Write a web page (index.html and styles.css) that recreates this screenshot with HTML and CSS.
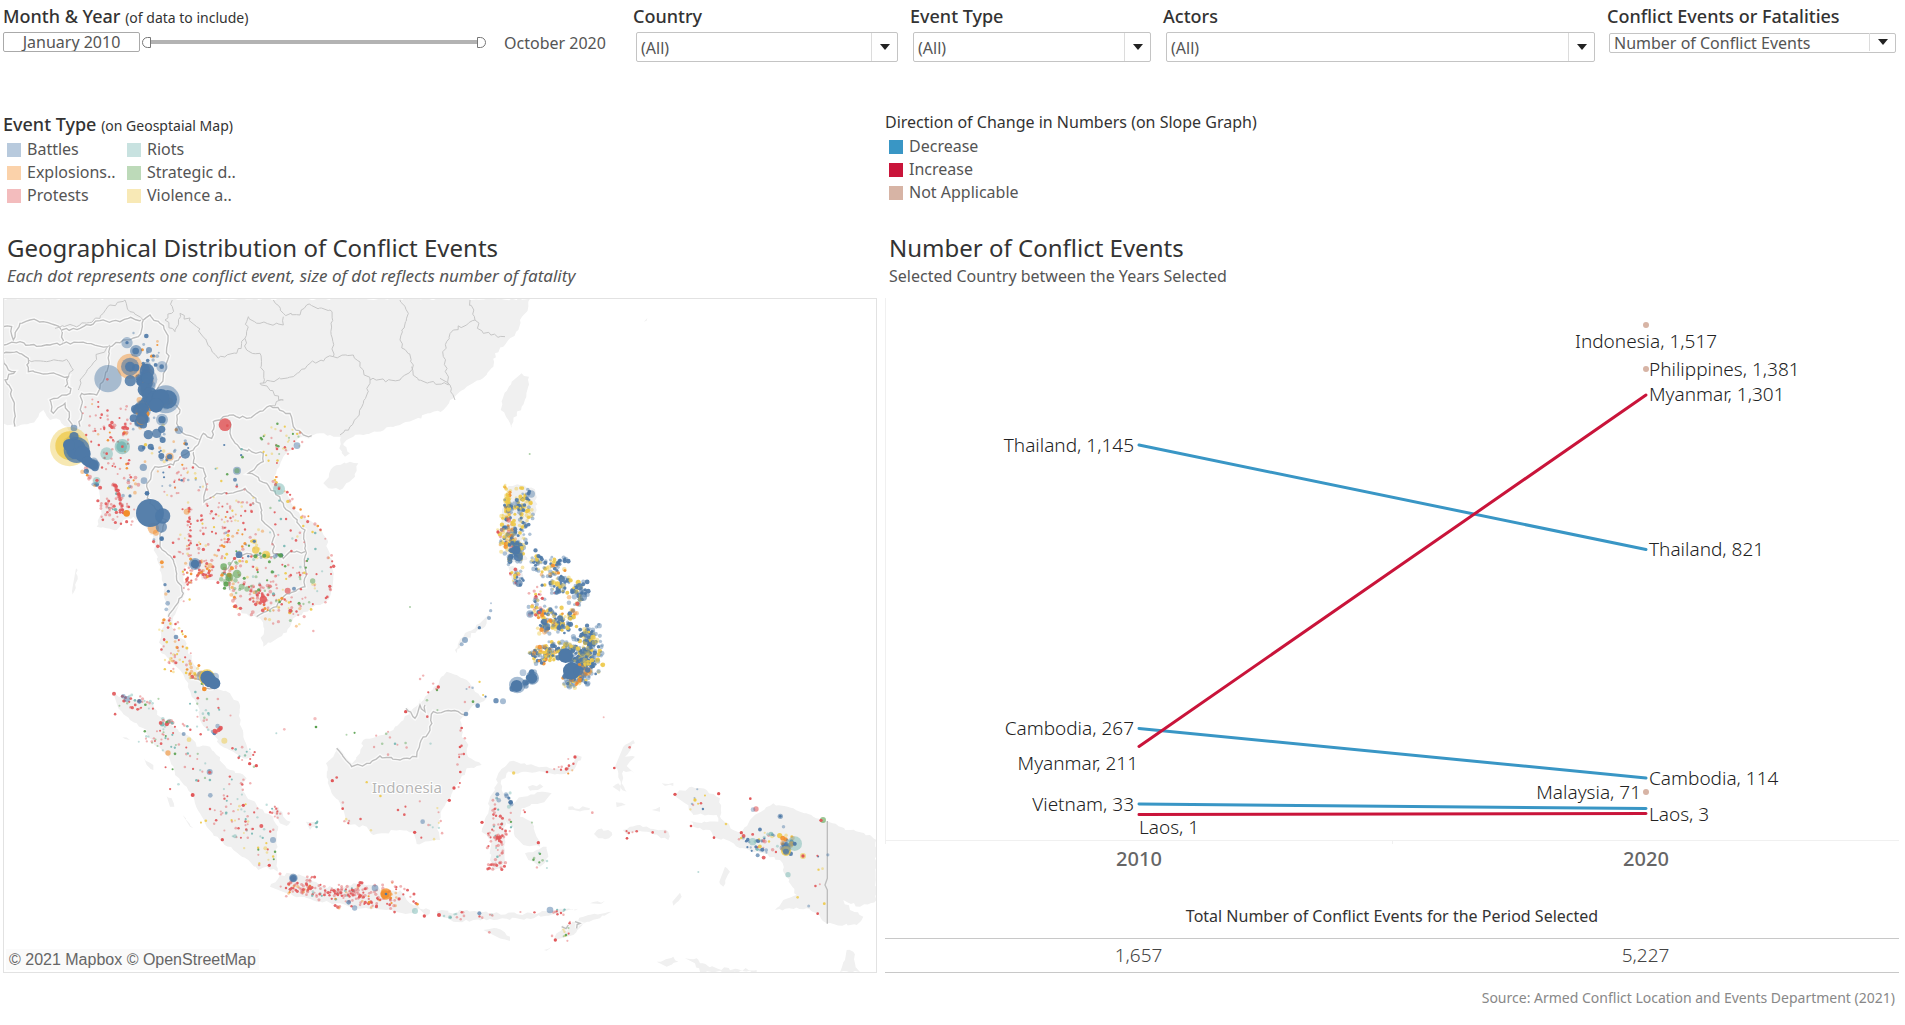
FILE: index.html
```html
<!DOCTYPE html>
<html lang="en">
<head>
<meta charset="utf-8">
<title>Conflict Events in Southeast Asia</title>
<link rel="stylesheet" href="styles.css">
</head>
<body>
<main class="dashboard">
  <form class="filters">
    <div class="filter">
      <label class="filter-label" for="date-from">Month &amp; Year <span class="note">(of data to include)</span></label>
      <div class="period">
        <input class="date-box" id="date-from" type="text" value="January 2010">
        <div class="range">
          <input class="range-input range-start" type="range" min="0" max="129" value="0" aria-label="Start month">
          <input class="range-input range-end" type="range" min="0" max="129" value="129" aria-label="End month">
        </div>
        <span class="date-end">October 2020</span>
      </div>
    </div>
    <div class="filter">
      <label class="filter-label" for="country">Country</label>
      <div class="select"><select id="country"><option>(All)</option></select></div>
    </div>
    <div class="filter">
      <label class="filter-label" for="event-type">Event Type</label>
      <div class="select"><select id="event-type"><option>(All)</option></select></div>
    </div>
    <div class="filter">
      <label class="filter-label" for="actors">Actors</label>
      <div class="select"><select id="actors"><option>(All)</option></select></div>
    </div>
    <div class="filter">
      <label class="filter-label" for="measure">Conflict Events or Fatalities</label>
      <div class="select select-small"><select id="measure"><option>Number of Conflict Events</option></select></div>
    </div>
  </form>

  <div class="columns legends">
    <section class="legend">
      <h2 class="legend-title">Event Type <span class="note">(on Geosptaial Map)</span></h2>
      <ul class="legend-items legend-grid">
        <li class="battles">Battles</li>
        <li class="explosions">Explosions..</li>
        <li class="protests">Protests</li>
        <li class="riots">Riots</li>
        <li class="strategic">Strategic d..</li>
        <li class="violence">Violence a..</li>
      </ul>
    </section>
    <section class="legend">
      <h2 class="legend-title legend-title-small">Direction of Change in Numbers (on Slope Graph)</h2>
      <ul class="legend-items">
        <li class="decrease">Decrease</li>
        <li class="increase">Increase</li>
        <li class="not-applicable">Not Applicable</li>
      </ul>
    </section>
  </div>

  <div class="columns">
    <section class="panel">
      <h1 class="panel-title">Geographical Distribution of Conflict Events</h1>
      <p class="panel-subtitle italic">Each dot represents one conflict event, size of dot reflects number of fatality</p>
      <div class="map">
        <svg class="map-canvas" viewBox="4 299 872 673" role="img" aria-label="Map of conflict events">
          <g id="land" transform="translate(0 290) scale(.33333)"></g>
          <text class="map-label" x="372" y="793">Indonesia</text>
          <g id="events" transform="translate(0 290) scale(.33333)"></g>
        </svg>
        <span class="attribution">© 2021 Mapbox © OpenStreetMap</span>
      </div>
    </section>

    <section class="panel">
      <h1 class="panel-title">Number of Conflict Events</h1>
      <p class="panel-subtitle">Selected Country between the Years Selected</p>
      <svg class="slope" viewBox="885 298 1014 582" role="img" aria-label="Slope graph from 2010 to 2020">
        <path class="axis" d="M885.5 298V844M885 840.500H1899M1392.500 840V844"/>
        <g class="down">
          <path d="M1139 445L1646 549.500"/>
          <path d="M1139 728.500L1646 778"/>
          <path d="M1139 804L1646 808.500"/>
        </g>
        <g class="up">
          <path d="M1139 746.500L1646 395"/>
          <path d="M1139 814.500L1646 813.500"/>
        </g>
        <g class="na">
          <circle cx="1646" cy="325" r="3"/>
          <circle cx="1646" cy="369" r="3"/>
          <circle cx="1646" cy="792" r="3"/>
        </g>
        <g class="mark end">
          <text x="1134" y="452">Thailand, 1,145</text>
          <text x="1134" y="735">Cambodia, 267</text>
          <text x="1138" y="770">Myanmar, 211</text>
          <text x="1134" y="811">Vietnam, 33</text>
          <text x="1641" y="799">Malaysia, 71</text>
        </g>
        <g class="mark">
          <text x="1139" y="834">Laos, 1</text>
          <text x="1575" y="348">Indonesia, 1,517</text>
          <text x="1649" y="376">Philippines, 1,381</text>
          <text x="1649" y="401">Myanmar, 1,301</text>
          <text x="1649" y="556">Thailand, 821</text>
          <text x="1649" y="785">Cambodia, 114</text>
          <text x="1649" y="821">Laos, 3</text>
        </g>
        <g class="years">
          <text x="1139" y="866">2010</text>
          <text x="1646" y="866">2020</text>
        </g>
      </svg>
      <table class="totals">
        <caption>Total Number of Conflict Events for the Period Selected</caption>
        <tbody><tr><td>1,657</td><td>5,227</td></tr></tbody>
      </table>
    </section>
  </div>
  <footer class="source">Source: Armed Conflict Location and Events Department (2021)</footer>
</main>
<script src="map.js"></script>
</body>
</html>
```
FILE: styles.css
```css
* { box-sizing: border-box; }
body {
  margin: 0;
  background: #fff;
  color: #333;
  font-family: "Noto Sans", "Open Sans", sans-serif;
  font-size: 16px;
  font-weight: 400;
}
.dashboard { padding: 4px 6px 0 3px; }

.filters {
  display: grid;
  grid-template-columns: minmax(0, 630fr) minmax(0, 277fr) minmax(0, 253fr) minmax(0, 444fr) minmax(0, 292fr);
  height: 108px;
}
.filter { display: flex; flex-direction: column; align-items: stretch; }
.filter-label, .legend-title {
  margin: 0;
  font-size: 18px;
  line-height: 25px;
  font-weight: 500;
  white-space: nowrap;
}
.filter-label { padding-bottom: 3px; }
.note { font-size: 14px; font-weight: 400; }

.period { display: flex; align-items: center; height: 20px; margin-top: -1px; color: #555; }
.date-box {
  width: 137px;
  height: 20px;
  padding: 0;
  border: 1px solid #aaa;
  border-radius: 2px;
  color: #555;
  font: inherit;
  text-align: center;
}
.range {
  display: grid;
  align-items: center;
  width: 344px;
  height: 20px;
  margin-left: 2px;
  background: linear-gradient(#b3b3b3, #b3b3b3) center / 328px 4px no-repeat;
}
.range-input {
  grid-area: 1 / 1;
  width: 100%;
  height: 12px;
  margin: 0;
  background: none;
  appearance: none;
  pointer-events: none;
}
.range-input::-webkit-slider-thumb {
  width: 9px;
  height: 11px;
  border: 1px solid #777;
  background: #fff;
  appearance: none;
  pointer-events: auto;
}
.range-start::-webkit-slider-thumb { border-radius: 6px 0 0 6px; }
.range-end::-webkit-slider-thumb { border-radius: 0 6px 6px 0; }
.date-end { margin-left: 18px; padding-top: 1px; line-height: 20px; }

.select { position: relative; height: 30px; margin: 0 12px 0 3px; }
.select-small { height: 20px; margin: 0 3px 0 2px; }
.select select {
  width: 100%;
  height: 100%;
  padding: 2px 30px 0 4px;
  border: 1px solid #c4c4c4;
  border-radius: 2px;
  background: #fff;
  color: #555;
  font: inherit;
  line-height: 18px;
  appearance: none;
}
.select-small select { padding-top: 0; }
.select::before, .select::after { content: ""; position: absolute; pointer-events: none; }
.select::before { top: 1px; bottom: 1px; right: 26px; width: 1px; background: #dcdcdc; }
.select::after {
  right: 8px;
  top: calc(50% - 3px);
  border: 5px solid transparent;
  border-top: 6px solid #222;
  border-bottom: 0;
}

.columns { display: grid; grid-template-columns: minmax(0, 874fr) minmax(0, 1014fr); column-gap: 8px; }
.legends { height: 120px; }
.legend-title-small { padding-bottom: 3px; font-size: 16px; line-height: 20px; font-weight: 400; }
.legend-items { margin: 0; padding: 0 0 0 4px; list-style: none; line-height: 23px; color: #555; }
.legend-items li { display: flex; align-items: center; gap: 6px; }
.legend-items li::before { content: ""; width: 14px; height: 14px; }
.legend-grid {
  display: grid;
  grid-template-rows: repeat(3, 23px);
  grid-template-columns: 120px 120px;
  grid-auto-flow: column;
}
.battles::before { background: #b8cadd; }
.explosions::before { background: #fbd2aa; }
.protests::before { background: #f3bcbd; }
.riots::before { background: #c8e2e0; }
.strategic::before { background: #bddab9; }
.violence::before { background: #f8e9b6; }
.decrease::before { background: #3996c5; }
.increase::before { background: #c9143a; }
.not-applicable::before { background: #d7b4a5; }

.panel { display: flex; flex-direction: column; }
.panel-title { margin: 0 0 0 4px; font-size: 24px; line-height: 32px; font-weight: 400; }
.panel-subtitle { margin: 0 0 10px 4px; font-size: 16px; line-height: 24px; color: #555; }
.italic { font-size: 17px; font-style: italic; }

.map { position: relative; border: 1px solid #e2e2e2; }
.map-canvas, .slope { display: block; width: 100%; }
.map-label { fill: #b5b5b5; font-size: 15px; font-weight: 400; stroke: #fff; stroke-width: 2px; paint-order: stroke; }
.attribution {
  position: absolute;
  left: 2px;
  bottom: 2px;
  padding: 0 3px;
  background: #fafafa;
  color: #666;
  font: 16px/21px "Liberation Sans", Arial, sans-serif;
}
.coast { fill: #f0f0f0; }
.halo { fill: none; stroke: #fafafa; stroke-width: 12px; }
.border { fill: none; stroke: #bdbdbd; stroke-width: 4px; }
.province { fill: none; stroke: #c6c6c6; stroke-width: 3px; }

.axis { fill: none; stroke: #f0f0f0; }
.down, .up { fill: none; stroke-width: 3px; stroke-linecap: round; }
.down { stroke: #3996c5; }
.up { stroke: #c9143a; }
.na { fill: #d7b4a5; }
.mark { fill: #222; font-size: 19px; font-weight: 300; }
.end { text-anchor: end; }
.years { fill: #666; font-size: 20px; font-weight: 500; text-anchor: middle; }

.totals { width: 100%; border-collapse: collapse; table-layout: fixed; }
.totals caption { padding: 24px 0 9px; color: #333; font-size: 16px; line-height: 25px; font-weight: 400; }
.totals td {
  height: 34px;
  padding: 0 0 2px;
  border: solid #c8c8c8;
  border-width: 1px 0;
  font-size: 19px;
  font-weight: 300;
  line-height: 30px;
  color: #444;
  text-align: center;
}
.source { padding: 14px 4px 0 0; color: #888; font-size: 14px; line-height: 22px; text-align: right; }
```
FILE: map.js
```js
// Map geometry is kept in tiles; each tile has its own origin.
const TILE = { A: [0, 0], B: [0, 1050], C: [1320, 0], D: [1320, 1050] };
const COLOR = { b: '#4e79a7', o: '#f28e2b', r: '#e15759', t: '#76b7b2', g: '#59a14f', y: '#edc948' };
const NS = 'http://www.w3.org/2000/svg';

let seed = 7;
const rnd = () => { seed = (seed * 16807) % 2147483647; return seed / 2147483647; };
const gauss = () => (rnd() + rnd() - 1) * 1.3;

function parse(tile, text) {
  return text.trim().split(/\s+/).map(p => {
    const [x, y] = p.split(',').map(Number);
    return [x + TILE[tile][0], y + TILE[tile][1]];
  });
}

// Break long segments up so that coasts and borders look natural.
function rough(points, amount) {
  const out = [points[0]];
  for (let i = 1; i < points.length; i++) {
    const [x0, y0] = points[i - 1], [x1, y1] = points[i];
    const n = Math.max(1, Math.round(Math.hypot(x1 - x0, y1 - y0) / 11));
    for (let k = 1; k <= n; k++) {
      const j = k < n ? amount : 0;
      out.push([x0 + (x1 - x0) * k / n + (rnd() - .5) * j, y0 + (y1 - y0) * k / n + (rnd() - .5) * j]);
    }
  }
  return out;
}

function add(parent, tag, attrs) {
  const el = document.createElementNS(NS, tag);
  for (const k in attrs) el.setAttribute(k, attrs[k]);
  parent.appendChild(el);
}
const toPath = pts => 'M' + pts.map(p => p[0].toFixed(1) + ' ' + p[1].toFixed(1)).join('L');

const coasts = [
  // mainland with the Malay peninsula
  ['A', '10,26 1590,26 1585,50 1560,90 1555,120 1525,150 1510,170 1485,190 1480,230 1440,270 1400,290 1350,330 1330,360 1290,370 1240,390 1200,405 1160,412 1130,425 1090,435 1060,440 1040,450 1030,465 1050,490 1035,500 1018,475 1022,440 990,435 960,430 935,437 915,440 890,450 880,470 850,500 838,530 822,560 825,580 860,610 880,650 915,685 950,705 975,740 985,780 998,830 1000,860 990,920 970,940 930,955 905,975 880,985 870,1010 850,1030 825,1050 790,1070 785,1050 790,1010 780,985 750,980 725,970 710,945 695,910 680,895 670,880 640,870 605,870 600,845 590,820 555,830 550,860 558,885 550,915 535,950 520,980 515,1010 530,1040 555,1050 565,1080 575,1110 600,1150 640,1190 690,1210 718,1240 722,1290 730,1340 755,1400 730,1405 700,1385 660,1365 640,1330 605,1300 595,1250 575,1220 565,1180 540,1140 500,1100 485,1090 480,1050 490,1000 510,985 505,960 495,930 490,880 475,820 460,760 450,720 430,700 400,680 370,690 350,720 320,715 290,710 305,670 300,620 290,590 265,560 255,530 240,500 220,480 215,440 200,410 180,390 150,390 130,360 115,380 90,400 50,410 10,400'],
  ['A', '970,580 1000,530 1050,515 1075,520 1065,560 1020,600 985,595'],
  ['A', '228,835 233,840 225,900 215,925 218,890'],
  ['C', '245,250 267,260 262,300 245,350 220,395 215,415 205,390 182,360 190,320 215,275'],
  ['C', '205,588 240,585 285,598 290,660 262,700 245,720 250,760 260,810 205,820 180,740 190,650'],
  ['C', '205,830 235,835 250,860 240,890 220,885'],
  ['C', '150,970 140,1000 70,1052 50,1090 45,1080 70,1040 120,1000'],
  // Sumatra and its islands
  ['B', '340,160 370,175 430,180 460,195 480,230 520,260 570,290 590,320 630,320 650,345 680,385 720,400 740,415 725,440 740,470 765,485 775,505 820,530 835,560 830,600 830,655 833,695 800,680 775,690 745,660 700,630 660,600 620,560 600,520 580,470 560,440 525,405 510,360 490,335 460,310 430,265 390,240 355,205'],
  ['B', '432,355 460,375 460,390 440,375'], ['B', '500,468 515,475 523,500 510,500'],
  ['B', '548,525 580,565 570,560'], ['B', '362,288 390,300 375,297'],
  ['B', '815,510 835,500 850,530 872,545 860,558 835,540'], ['B', '918,545 945,545 948,560 930,570'],
  // Java to Timor
  ['B', '810,740 840,705 880,700 930,715 970,740 1020,745 1060,730 1130,735 1150,760 1200,750 1220,780 1260,805 1230,820 1160,810 1090,805 1010,790 960,785 900,770 860,760'],
  ['B', '1255,805 1290,810 1280,828'], ['B', '1310,815 1345,812 1340,835 1315,830'],
  ['D', '10,825 70,812 160,820 290,822 330,812 415,806 360,818 260,835 100,840 40,845'],
  ['D', '345,900 350,880 380,860 430,830 515,815 480,835 430,850 400,885'],
  ['D', '130,870 170,865 210,890 210,903 170,890'],
  ['D', '450,790 495,782 480,792'], ['D', '312,930 335,920 320,932'],
  // Borneo
  ['B', '1000,350 1015,325 1050,378 1080,340 1090,300 1130,290 1180,270 1230,215 1290,155 1340,95 1370,105 1400,120 1425,155 1460,175 1420,195 1400,225 1380,240 1385,290 1405,315 1400,340 1445,375 1400,385 1380,420 1360,450 1345,480 1325,510 1315,560 1320,600 1250,612 1240,575 1200,570 1120,585 1100,560 1045,555 1030,510 1015,480 995,460 985,420 978,370'],
  // Sulawesi and Halmahera
  ['D', '165,450 175,400 195,380 220,362 260,375 330,385 370,390 400,370 410,345 425,350 405,385 375,402 330,400 250,395 200,400 182,430 185,450 220,490 250,470 310,455 335,460 300,490 245,505 240,530 275,545 290,590 300,620 250,615 225,590 220,560 195,540 195,600 190,685 160,690 150,660 155,600 125,575 145,520 150,470'],
  ['D', '550,320 580,300 585,310 555,350 585,350 560,378 583,400 550,392 545,430 560,455 540,440 535,400 525,380'],
  ['D', '385,500 450,505 448,510 385,510'], ['D', '528,487 558,495 530,502'], ['D', '635,510 660,500 660,515'],
  ['D', '462,582 475,568 505,570 517,585 495,598 475,595'],
  ['D', '255,640 320,620 325,650 300,680 265,660'],
  ['D', '548,570 600,555 685,575 685,600 620,575 560,582'], ['D', '665,430 700,428 700,438 675,438'],
  // New Guinea
  ['D', '700,465 755,440 800,450 840,475 840,530 880,570 905,575 930,540 1000,490 1060,505 1120,530 1165,545 1230,570 1290,585 1309,600 1309,780 1260,800 1210,780 1230,810 1270,830 1250,855 1160,850 1130,820 1100,805 1005,810 1030,780 1070,765 1040,710 1020,660 970,640 900,625 860,600 820,590 810,570 760,560 750,545 835,545 830,525 760,525 735,490'],
  ['D', '855,680 870,695 850,740 838,725'], ['D', '720,758 725,770 700,797 697,785'],
  // northern Australia
  ['D', '650,965 700,950 715,965 680,980'], ['D', '735,955 770,955 780,970 830,985 950,990 950,996 780,996 765,970'],
  ['D', '1220,930 1240,935 1245,970 1260,996 1200,996 1215,960'],
  ['C', '612,95 622,84 620,92'], ['D', '263,440 300,432 310,440 270,452'], ['D', '518,440 535,430 540,455']
];

const borders = [
  ['A', '10,110 35,110 40,150 60,100 90,90 130,95 165,105 185,120 190,160 150,165 90,165 60,155 12,165'],
  ['A', '185,120 240,115 300,92 360,95 385,85 430,90 450,75 480,100 500,130 503,210 490,260 470,300 540,360 530,400 550,430 600,450 610,430 635,445 640,395 670,380 700,375 740,385 770,370 810,347 870,370 880,410 910,435 935,437'],
  ['A', '690,395 690,430 720,475 790,490 790,515 745,550 800,580 850,640 880,680 915,720 915,890 850,920 830,950 770,980'],
  ['A', '600,450 580,480 580,520 610,535 620,590 612,635 650,610 710,605 735,595 780,640 785,690 820,725 820,790 850,805 870,785 915,785'],
  ['A', '580,480 550,495 520,525 465,530 440,590 450,640 500,690 480,740 480,770 520,810 530,870 550,910 525,950 505,980'],
  ['A', '820,800 740,790 700,810 675,840 690,900'],
  ['A', '190,160 260,160 330,170 370,150 415,140 430,90'],
  ['A', '330,170 325,230 290,315 245,310 240,410'],
  ['A', '205,260 210,310 150,330 160,370 195,340 215,410'],
  ['A', '10,190 50,185 85,205 85,245 150,250 205,260 195,290'],
  ['A', '10,205 25,240 45,245 15,270 35,300 45,410'],
  ['B', '1010,325 1055,380 1110,370 1140,348 1200,360 1250,350 1260,310 1290,270 1300,215 1375,215 1395,225'],
  ['B', '1218,205 1245,235 1260,195 1275,215 1275,195'],
  ['B', '570,115 600,120 610,145 640,145'],
  ['D', '365,860 378,866 385,855'], ['D', '405,845 420,850 410,865']
];
const provinces = [
  ['A', '165,115 240,105 300,85 330,45 375,30 390,65 430,90'], ['A', '85,210 140,215 200,208 220,240 205,260'],
  ['A', '235,300 240,270 300,190 330,165'],
  ['A', '517,30 515,70 495,90 525,125 540,70 590,110 630,170 655,205 710,190 735,145 745,80 780,100 850,105 850,80'],
  ['A', '820,30 850,70 900,75 920,45 990,60 1000,200 930,220 880,260 780,280 850,330 810,347'],
  ['A', '735,145 740,180 780,190 790,280'],
  ['A', '1000,200 1060,195 1090,240 1110,270 1090,340 1050,410 1020,435'],
  ['A', '1110,270 1200,270 1240,225 1200,150 1225,70 1200,30'],
  ['A', '1235,230 1255,270 1345,285 1330,200 1340,155 1360,120 1425,90 1410,30'],
  ['A', '1425,90 1450,130 1515,140'], ['A', '1320,265 1350,285 1365,330']
];

const land = document.getElementById('land');
coasts.forEach(([t, p]) => add(land, 'path', { class: 'coast', d: toPath(rough(parse(t, p), 9)) + 'Z' }));
borders.forEach(([t, p]) => {
  const d = toPath(rough(parse(t, p), 9));
  add(land, 'path', { class: 'halo', d });
  add(land, 'path', { class: 'border', d });
});
provinces.forEach(([t, p]) => add(land, 'path', { class: 'province', d: toPath(rough(parse(t, p), 12)) }));
add(land, 'path', { class: 'border', d: 'M2482 1593V1765L2475 1785L2482 1800V1901' });

const events = document.getElementById('events');
const dot = (x, y, r, c, o) => add(events, 'circle', { cx: x.toFixed(1), cy: y.toFixed(1), r: r.toFixed(1), fill: COLOR[c], opacity: o });

// cloud: tile, cx, cy, rx, ry, count, colour mix, min r, max r
const clouds = [
  ['A', 330, 390, 70, 85, 44, 'rrrrro', 3, 4], ['A', 376, 415, 8, 22, 12, 'rro', 4, 6], ['A', 335, 410, 14, 12, 6, 'r', 4, 6],
  ['A', 340, 520, 55, 70, 22, 'rrro', 3, 4], ['A', 350, 665, 50, 45, 46, 'rrrrt', 3, 5], ['A', 395, 580, 25, 50, 14, 'royb', 3, 6],
  ['A', 540, 570, 75, 60, 36, 'rrryob', 3, 4], ['A', 640, 700, 95, 100, 56, 'rrrrroy', 3, 4], ['A', 700, 670, 80, 70, 34, 'rrryo', 3, 4],
  ['A', 590, 810, 65, 50, 44, 'rrrrroy', 3, 5], ['A', 620, 850, 32, 24, 22, 'rrrro', 4, 5], ['A', 740, 770, 80, 45, 34, 'rrygbo', 3, 5],
  ['A', 790, 925, 55, 40, 46, 'rrrrrro', 3, 6], ['A', 760, 870, 90, 70, 50, 'rrrgygt', 3, 5], ['A', 690, 855, 24, 35, 22, 'gggor', 4, 8],
  ['A', 890, 840, 75, 110, 50, 'rrrygt', 3, 4], ['A', 870, 970, 70, 50, 34, 'rryogy', 3, 5], ['A', 840, 460, 55, 55, 42, 'rrryyg', 3, 4],
  ['A', 800, 795, 40, 10, 16, 'gyygb', 4, 7], ['A', 560, 880, 14, 60, 16, 'rrry', 3, 4], ['A', 520, 1010, 35, 40, 18, 'rryo', 3, 4],
  ['A', 690, 530, 50, 70, 10, 'tgyb', 3, 4], ['A', 480, 470, 85, 70, 28, 'bbyo', 3, 6], ['A', 450, 200, 55, 60, 18, 'bbo', 3, 6],
  ['A', 820, 690, 60, 70, 12, 'gryt', 3, 4],
  ['B', 525, 40, 45, 55, 36, 'rrroyy', 3, 5], ['B', 580, 95, 24, 25, 18, 'ooyr', 4, 6], ['B', 640, 215, 65, 75, 26, 'rrgtr', 3, 4],
  ['B', 650, 270, 12, 12, 8, 'rrb', 5, 7], ['B', 735, 345, 35, 30, 14, 'rrgt', 3, 4],
  ['B', 420, 200, 60, 30, 20, 'rrrgt', 3, 5], ['B', 500, 250, 16, 12, 12, 'rrt', 4, 7], ['B', 480, 280, 65, 45, 34, 'rrrgt', 3, 4],
  ['B', 570, 370, 65, 80, 22, 'rtgr', 3, 4], ['B', 680, 500, 80, 70, 38, 'rrrty', 3, 4], ['B', 750, 570, 75, 70, 34, 'rrty', 3, 4],
  ['B', 800, 640, 35, 35, 10, 'yrgt', 3, 4], ['B', 840, 520, 28, 25, 12, 'rrr', 3, 4], ['B', 940, 550, 22, 12, 5, 'rt', 3, 4],
  ['B', 910, 738, 60, 30, 62, 'rrrrro', 3, 5], ['B', 1000, 760, 75, 28, 56, 'rrrrrt', 3, 5], ['B', 1090, 768, 85, 36, 84, 'rrrrrro', 3, 5],
  ['B', 1180, 775, 60, 32, 36, 'rrrrro', 3, 5], ['B', 1140, 310, 130, 60, 14, 'rrgt', 3, 4], ['B', 1290, 160, 40, 60, 9, 'rg', 3, 4],
  ['B', 1150, 500, 180, 90, 14, 'rry', 3, 4], ['B', 1310, 560, 25, 50, 10, 'ryt', 3, 4],
  ['C', 200, 650, 12, 70, 60, 'yyyyob', 4, 6], ['C', 255, 640, 28, 55, 64, 'yyybb', 4, 6], ['C', 215, 650, 35, 25, 26, 'bbby', 4, 7],
  ['C', 205, 735, 34, 60, 90, 'yyyobbr', 4, 7], ['C', 230, 785, 28, 40, 70, 'bbbyy', 5, 8], ['C', 250, 710, 24, 55, 26, 'bby', 4, 7],
  ['C', 230, 860, 25, 40, 26, 'bbry', 3, 6], ['C', 295, 815, 30, 35, 30, 'bbyb', 4, 7], ['C', 340, 840, 40, 50, 48, 'bbyyo', 4, 7],
  ['C', 360, 885, 42, 35, 36, 'bbby', 4, 8], ['C', 420, 905, 26, 45, 40, 'bbby', 4, 8], ['C', 402, 965, 22, 45, 22, 'yybo', 4, 7],
  ['C', 290, 950, 32, 40, 26, 'bbry', 4, 7], ['C', 330, 995, 50, 52, 96, 'bbyyo', 4, 7], ['C', 370, 1000, 24, 30, 24, 'bby', 4, 8],
  ['C', 445, 1030, 38, 30, 42, 'bbby', 4, 8], ['C', 360, 815, 30, 20, 8, 'bb', 4, 7], ['C', 300, 910, 50, 30, 9, 'ryr', 3, 5],
  ['D', 315, 45, 52, 30, 84, 'bbyyo', 4, 7], ['D', 435, 50, 56, 66, 240, 'bbbbyy', 4, 8], ['D', 405, 110, 42, 38, 96, 'bbbyo', 4, 8],
  ['D', 360, 30, 40, 35, 50, 'bbyy', 4, 8], ['D', 172, 590, 30, 90, 60, 'rrrrrrt', 3, 5], ['D', 165, 675, 30, 14, 12, 'rrr', 4, 5],
  ['D', 220, 540, 60, 40, 14, 'rrtg', 3, 4], ['D', 385, 380, 40, 22, 10, 'rro', 3, 4], ['D', 200, 480, 25, 20, 8, 'bbt', 4, 7],
  ['D', 985, 605, 80, 42, 40, 'bbyytr', 3, 6], ['D', 1040, 615, 20, 28, 20, 'bbyo', 5, 8], ['D', 960, 615, 50, 35, 12, 'brb', 3, 6],
  ['D', 770, 490, 60, 45, 9, 'yrb', 3, 4], ['D', 1110, 700, 50, 90, 9, 'ryb', 3, 5], ['D', 370, 880, 35, 30, 10, 'rgy', 3, 4],
  ['D', 300, 660, 45, 25, 9, 'trg', 3, 4], ['D', 100, 825, 90, 12, 14, 'rtr', 3, 4], ['D', 330, 815, 80, 10, 11, 'rrt', 3, 4],
  ['D', 60, 320, 14, 140, 10, 'rrr', 3, 4], ['D', 100, 165, 50, 40, 7, 'yrb', 3, 4], ['D', 600, 575, 80, 15, 6, 'rrt', 3, 4]
];

// trail: tile, points, spread, count, colour mix, min r, max r
const trails = [
  ['A', '338,575 352,600 362,630 370,670', 4, 34, 'rrrr', 4, 5],
  ['A', '822,560 825,580 860,610 880,650 915,685 950,705 975,740 985,780 998,830 995,890 975,935', 8, 40, 'rrrroy', 3, 5],
  ['A', '695,890 705,940 725,970 760,970', 7, 14, 'rroy', 4, 6],
  ['A', '568,650 570,720 566,780', 5, 24, 'rrr', 3, 4],
  ['A', '250,540 275,560 295,590', 10, 12, 'brgo', 4, 7],
  ['A', '460,740 475,800 495,880 505,940 495,1000', 7, 9, 'bro', 4, 6],
  ['A', '400,370 460,330 500,330', 18, 60, 'bbbbo', 8, 14],
  ['A', '425,280 445,230 440,300 460,340', 10, 50, 'bbbbo', 8, 16],
  ['A', '430,350 425,400', 14, 26, 'bbbo', 7, 14],
  ['A', '210,450 230,480 265,515 285,528', 7, 70, 'bbbb', 8, 15],
  ['B', '340,160 420,180 460,190', 5, 12, 'rrt', 3, 5],
  ['B', '600,102 620,110 640,132', 6, 20, 'bbyo', 9, 14],
  ['D', '225,140 270,125 275,95', 8, 12, 'bb', 5, 9]
];

const pick = s => s[Math.floor(rnd() * s.length)];
const strength = () => (rnd() < .4 ? .9 : .45);

clouds.forEach(([t, cx, cy, rx, ry, n, mix, a, b]) => {
  // the Philippine islands are small, so their clouds stay tight
  const tight = t === 'C' || (t === 'D' && cy < 120) ? .78 : 1;
  for (let i = 0; i < n; i++) {
    dot(TILE[t][0] + cx + gauss() * rx * tight, TILE[t][1] + cy + gauss() * ry * tight, a + rnd() * (b - a), pick(mix), strength());
  }
});
trails.forEach(([t, p, spread, n, mix, a, b]) => {
  const pts = parse(t, p);
  for (let i = 0; i < n; i++) {
    const f = rnd() * (pts.length - 1), k = Math.floor(f), u = f - k;
    dot(pts[k][0] + (pts[k + 1][0] - pts[k][0]) * u + gauss() * spread,
      pts[k][1] + (pts[k + 1][1] - pts[k][1]) * u + gauss() * spread, a + rnd() * (b - a), pick(mix), strength());
  }
});

// single events with a known place and size: tile, x, y, r, colour, opacity
const marks = [
  ['A', 209, 470, 59, 'y', .42], ['A', 209, 467, 43, 'y', .75], ['A', 222, 414, 10, 'b', .6], ['A', 222, 440, 14, 'b', .9],
  ['A', 230, 480, 39, 'b', .8], ['A', 228, 478, 30, 'b', 1], ['A', 207, 465, 18, 'b', 1], ['A', 248, 492, 24, 'b', 1], ['A', 262, 514, 15, 'b', 1], ['A', 284, 525, 15, 'b', .5],
  ['A', 324, 266, 41, 'b', .45], ['A', 322, 268, 4, 'r', .7], ['A', 389, 229, 38, 'o', .45], ['A', 390, 230, 27, 'b', .6], ['A', 390, 230, 15, 'b', .9], ['A', 407, 233, 11, 'b', .9],
  ['A', 381, 158, 17, 'b', .45], ['A', 381, 158, 5, 'b', .9], ['A', 408, 183, 18, 'b', .6], ['A', 407, 183, 10, 'b', .9], ['A', 439, 138, 7, 'b', .9], ['A', 447, 180, 9, 'b', .7],
  ['A', 486, 230, 17, 'b', .4], ['A', 485, 230, 7, 'b', .9], ['A', 391, 272, 17, 'b', .85], ['A', 441, 243, 22, 'b', .9], ['A', 441, 268, 31, 'b', .4], ['A', 443, 265, 18, 'b', .9],
  ['A', 434, 299, 21, 'b', .95], ['A', 450, 316, 24, 'b', .95], ['A', 468, 330, 29, 'b', 1], ['A', 497, 328, 42, 'b', .5], ['A', 503, 328, 28, 'b', .95], ['A', 483, 322, 25, 'b', 1],
  ['A', 468, 346, 22, 'b', 1], ['A', 427, 357, 18, 'b', .95], ['A', 405, 357, 12, 'b', .9], ['A', 427, 385, 18, 'b', .9], ['A', 486, 389, 18, 'b', .45], ['A', 486, 389, 11, 'b', .95],
  ['A', 445, 434, 14, 'b', .85], ['A', 470, 430, 14, 'b', .8], ['A', 485, 418, 11, 'b', .9], ['A', 488, 450, 9, 'b', .9], ['A', 537, 420, 12, 'b', .5], ['A', 556, 492, 14, 'b', .8],
  ['A', 424, 475, 10, 'b', .8], ['A', 452, 470, 9, 'b', .9], ['A', 484, 498, 9, 'b', .9], ['A', 509, 500, 12, 'o', .5], ['A', 509, 500, 8, 'b', .9], ['A', 430, 532, 11, 'b', .6], ['A', 432, 572, 10, 'b', .5],
  ['A', 367, 470, 23, 't', .6], ['A', 365, 470, 16, 't', .8], ['A', 320, 491, 19, 't', .5], ['A', 367, 470, 4, 'r', 1], ['A', 320, 491, 4, 'r', 1],
  ['A', 675, 404, 19, 'r', .85], ['A', 682, 407, 4, 'r', 1], ['A', 891, 467, 10, 'b', .5], ['A', 837, 597, 18, 't', .5], ['A', 837, 596, 4, 'r', 1],
  ['A', 711, 542, 12, 'b', .5], ['A', 711, 542, 8, 'g', .5], ['A', 705, 569, 6, 'b', .8], ['A', 441, 610, 7, 'b', 1],
  ['A', 460, 715, 17, 'o', .5], ['A', 468, 728, 9, 'o', .5], ['A', 450, 669, 42, 'b', .95], ['A', 488, 678, 23, 'b', .9], ['A', 484, 711, 17, 'b', .7], ['A', 485, 746, 7, 'b', 1],
  ['A', 380, 670, 10, 'o', 1], ['A', 585, 822, 18, 'b', .6], ['A', 585, 822, 13, 'b', 1], ['A', 560, 665, 9, 'o', .5], ['A', 630, 827, 8, 'o', .5],
  ['A', 717, 794, 10, 'b', .9], ['A', 767, 780, 11, 'y', .8], ['A', 798, 794, 12, 'y', .7], ['A', 793, 797, 6, 'g', .9], ['A', 766, 799, 6, 'g', .9], ['A', 763, 754, 8, 'y', .6], ['A', 763, 754, 5, 'b', .9],
  ['A', 711, 852, 13, 'g', .6], ['A', 688, 862, 12, 'g', .6], ['A', 671, 830, 10, 'g', .7], ['A', 725, 890, 9, 'g', .5], ['A', 741, 897, 8, 'g', .5], ['A', 938, 873, 8, 'g', .5],
  ['A', 790, 928, 11, 'r', .9], ['A', 863, 902, 9, 'r', .7], ['A', 882, 896, 6, 'b', .7], ['A', 871, 962, 6, 'r', .9], ['A', 1230, 951, 3, 'g', .5],
  ['A', 259, 544, 8, 'b', .8], ['A', 290, 572, 11, 't', .5], ['A', 291, 571, 5, 'r', .9], ['A', 528, 1041, 7, 'b', .7], ['A', 503, 940, 7, 'b', .5], ['A', 495, 884, 5, 'b', .8],
  ['B', 621, 112, 24, 'y', .8], ['B', 645, 110, 12, 'b', .4], ['B', 622, 113, 21, 'b', 1], ['B', 630, 122, 20, 'b', 1], ['B', 643, 130, 18, 'b', 1], ['B', 613, 147, 7, 'o', 1],
  ['B', 342, 161, 6, 'r', .9], ['B', 370, 169, 7, 'b', .5], ['B', 381, 177, 9, 'b', .5], ['B', 418, 184, 7, 'b', .8], ['B', 504, 339, 8, 'o', .6], ['B', 567, 299, 7, 'y', .5], ['B', 673, 302, 9, 'y', .5],
  ['B', 551, 282, 6, 'b', .6], ['B', 629, 396, 9, 'b', .5], ['B', 629, 397, 5, 'r', .8], ['B', 631, 466, 7, 'b', .5], ['B', 578, 465, 6, 'r', 1], ['B', 730, 496, 5, 'r', 1],
  ['B', 819, 600, 9, 'b', .5], ['B', 784, 558, 6, 'r', .9], ['B', 808, 676, 5, 'r', 1], ['B', 667, 599, 5, 'r', 1], ['B', 796, 625, 6, 'y', .5], ['B', 705, 589, 6, 't', .5],
  ['B', 880, 714, 13, 'b', .6], ['B', 880, 715, 10, 'b', .9], ['B', 1125, 744, 10, 'b', .5], ['B', 1158, 762, 17, 'o', .8], ['B', 1155, 763, 12, 'o', .9], ['B', 1158, 762, 4, 'b', 1],
  ['B', 1064, 804, 8, 'b', .5], ['B', 1046, 787, 7, 'b', .7], ['B', 1245, 813, 9, 't', .5], ['B', 1273, 828, 5, 'r', 1], ['B', 1317, 825, 6, 'r', 1], ['B', 1268, 545, 7, 'b', .5],
  ['B', 769, 377, 5, 'r', 1], ['B', 749, 371, 5, 'r', 1], ['B', 997, 422, 5, 'r', 1], ['B', 1217, 215, 5, 'r', 1], ['B', 1315, 141, 5, 'r', 1], ['B', 1244, 577, 5, 'r', 1],
  ['B', 1028, 506, 4, 'r', 1], ['B', 948, 261, 4, 'g', 1], ['B', 945, 236, 5, 'r', .4], ['B', 853, 268, 4, 'r', .4], ['B', 829, 280, 3, 't', .5], ['B', 1213, 524, 4, 'r', .9],
  ['C', 274, 612, 11, 'b', .45], ['C', 228, 780, 14, 'b', 1], ['C', 235, 800, 14, 'b', .9], ['C', 210, 806, 8, 'b', .9], ['C', 237, 880, 11, 'b', .7], ['C', 206, 691, 7, 'r', .6],
  ['C', 174, 726, 5, 'r', 1], ['C', 269, 492, 3, 'g', .5], ['C', 430, 922, 11, 'b', .6], ['C', 418, 890, 10, 'b', .8], ['C', 365, 867, 10, 'b', .9], ['C', 270, 972, 11, 'b', .5],
  ['C', 298, 967, 5, 'r', 1], ['C', 307, 925, 5, 'r', 1], ['C', 288, 919, 4, 'r', 1], ['C', 412, 941, 6, 'r', .9], ['C', 320, 1010, 11, 'b', .8], ['C', 312, 995, 9, 'b', .9], ['C', 360, 985, 9, 'b', .9],
  ['C', 152, 962, 5, 'b', .5], ['C', 147, 984, 6, 'b', .6], ['C', 118, 1013, 5, 'b', .9], ['C', 153, 940, 3, 'b', .4], ['C', 75, 1050, 9, 'b', .6],
  ['D', 377, 47, 22, 'b', 1], ['D', 395, 93, 26, 'b', 1], ['D', 415, 92, 15, 'b', .9], ['D', 443, 94, 13, 'o', .5], ['D', 443, 90, 8, 'b', .9],
  ['D', 232, 135, 25, 'b', .5], ['D', 230, 138, 18, 'b', 1], ['D', 277, 114, 20, 'b', .6], ['D', 276, 115, 16, 'b', 1], ['D', 275, 96, 8, 'b', 1], ['D', 249, 98, 10, 'b', .4], ['D', 258, 138, 8, 'b', .6],
  ['D', 168, 182, 8, 'b', .8], ['D', 189, 184, 9, 'b', .5], ['D', 113, 197, 7, 'b', .8], ['D', 78, 222, 7, 'b', .7], ['D', 99, 185, 4, 'g', .9], ['D', 65, 13, 6, 'b', .5],
  ['D', 42, 444, 5, 'r', 1], ['D', 28, 481, 5, 'r', 1], ['D', 60, 321, 4, 'r', 1], ['D', 65, 264, 4, 'r', 1], ['D', 61, 396, 4, 'r', 1],
  ['D', 172, 463, 6, 'b', .7], ['D', 200, 468, 7, 'b', .5], ['D', 212, 487, 7, 'b', 1], ['D', 221, 399, 5, 'y', .8], ['D', 405, 351, 5, 'r', 1], ['D', 321, 396, 4, 'r', 1], ['D', 379, 387, 5, 'r', 1],
  ['D', 295, 608, 5, 'r', 1], ['D', 126, 547, 5, 'r', 1], ['D', 523, 384, 4, 'r', 1], ['D', 569, 322, 4, 'r', .7], ['D', 491, 232, 3, 'r', .4], ['D', 457, 518, 4, 'r', .5], ['D', 561, 595, 4, 'r', 1],
  ['D', 705, 463, 5, 'r', 1], ['D', 836, 461, 5, 'r', 1], ['D', 753, 558, 4, 'r', 1], ['D', 822, 593, 4, 'r', 1], ['D', 765, 480, 5, 'y', 1], ['D', 858, 552, 4, 'y', .8], ['D', 904, 578, 5, 'r', 1],
  ['D', 931, 476, 4, 'r', 1], ['D', 948, 507, 8, 'r', .6], ['D', 939, 509, 7, 'b', .4], ['D', 1021, 529, 8, 'b', .6], ['D', 1021, 529, 4, 'b', 1], ['D', 993, 582, 7, 't', .7], ['D', 938, 605, 11, 't', .5],
  ['D', 1064, 611, 22, 't', .5], ['D', 1064, 611, 6, 'b', .9], ['D', 1038, 633, 15, 'y', .8], ['D', 1038, 625, 14, 'b', .5], ['D', 1038, 635, 9, 'b', .8], ['D', 1089, 648, 9, 'y', .6], ['D', 1089, 648, 5, 'r', 1],
  ['D', 1149, 540, 9, 'g', .6], ['D', 1143, 541, 5, 'r', 1], ['D', 1044, 704, 8, 't', .5], ['D', 1133, 821, 4, 'r', 1], ['D', 1073, 772, 4, 'y', .8], ['D', 953, 646, 6, 'b', .7], ['D', 967, 629, 6, 'b', .9],
  ['D', 330, 810, 10, 'b', .5], ['D', 118, 820, 6, 'b', .7], ['D', 30, 832, 6, 't', .5], ['D', 148, 877, 4, 'r', .5], ['D', 346, 900, 5, 'r', 1], ['D', 378, 885, 4, 'g', .9], ['D', 775, 696, 3, 't', .5]
];
marks.forEach(([t, x, y, r, c, o]) => dot(TILE[t][0] + x, TILE[t][1] + y, r, c, o));
```
